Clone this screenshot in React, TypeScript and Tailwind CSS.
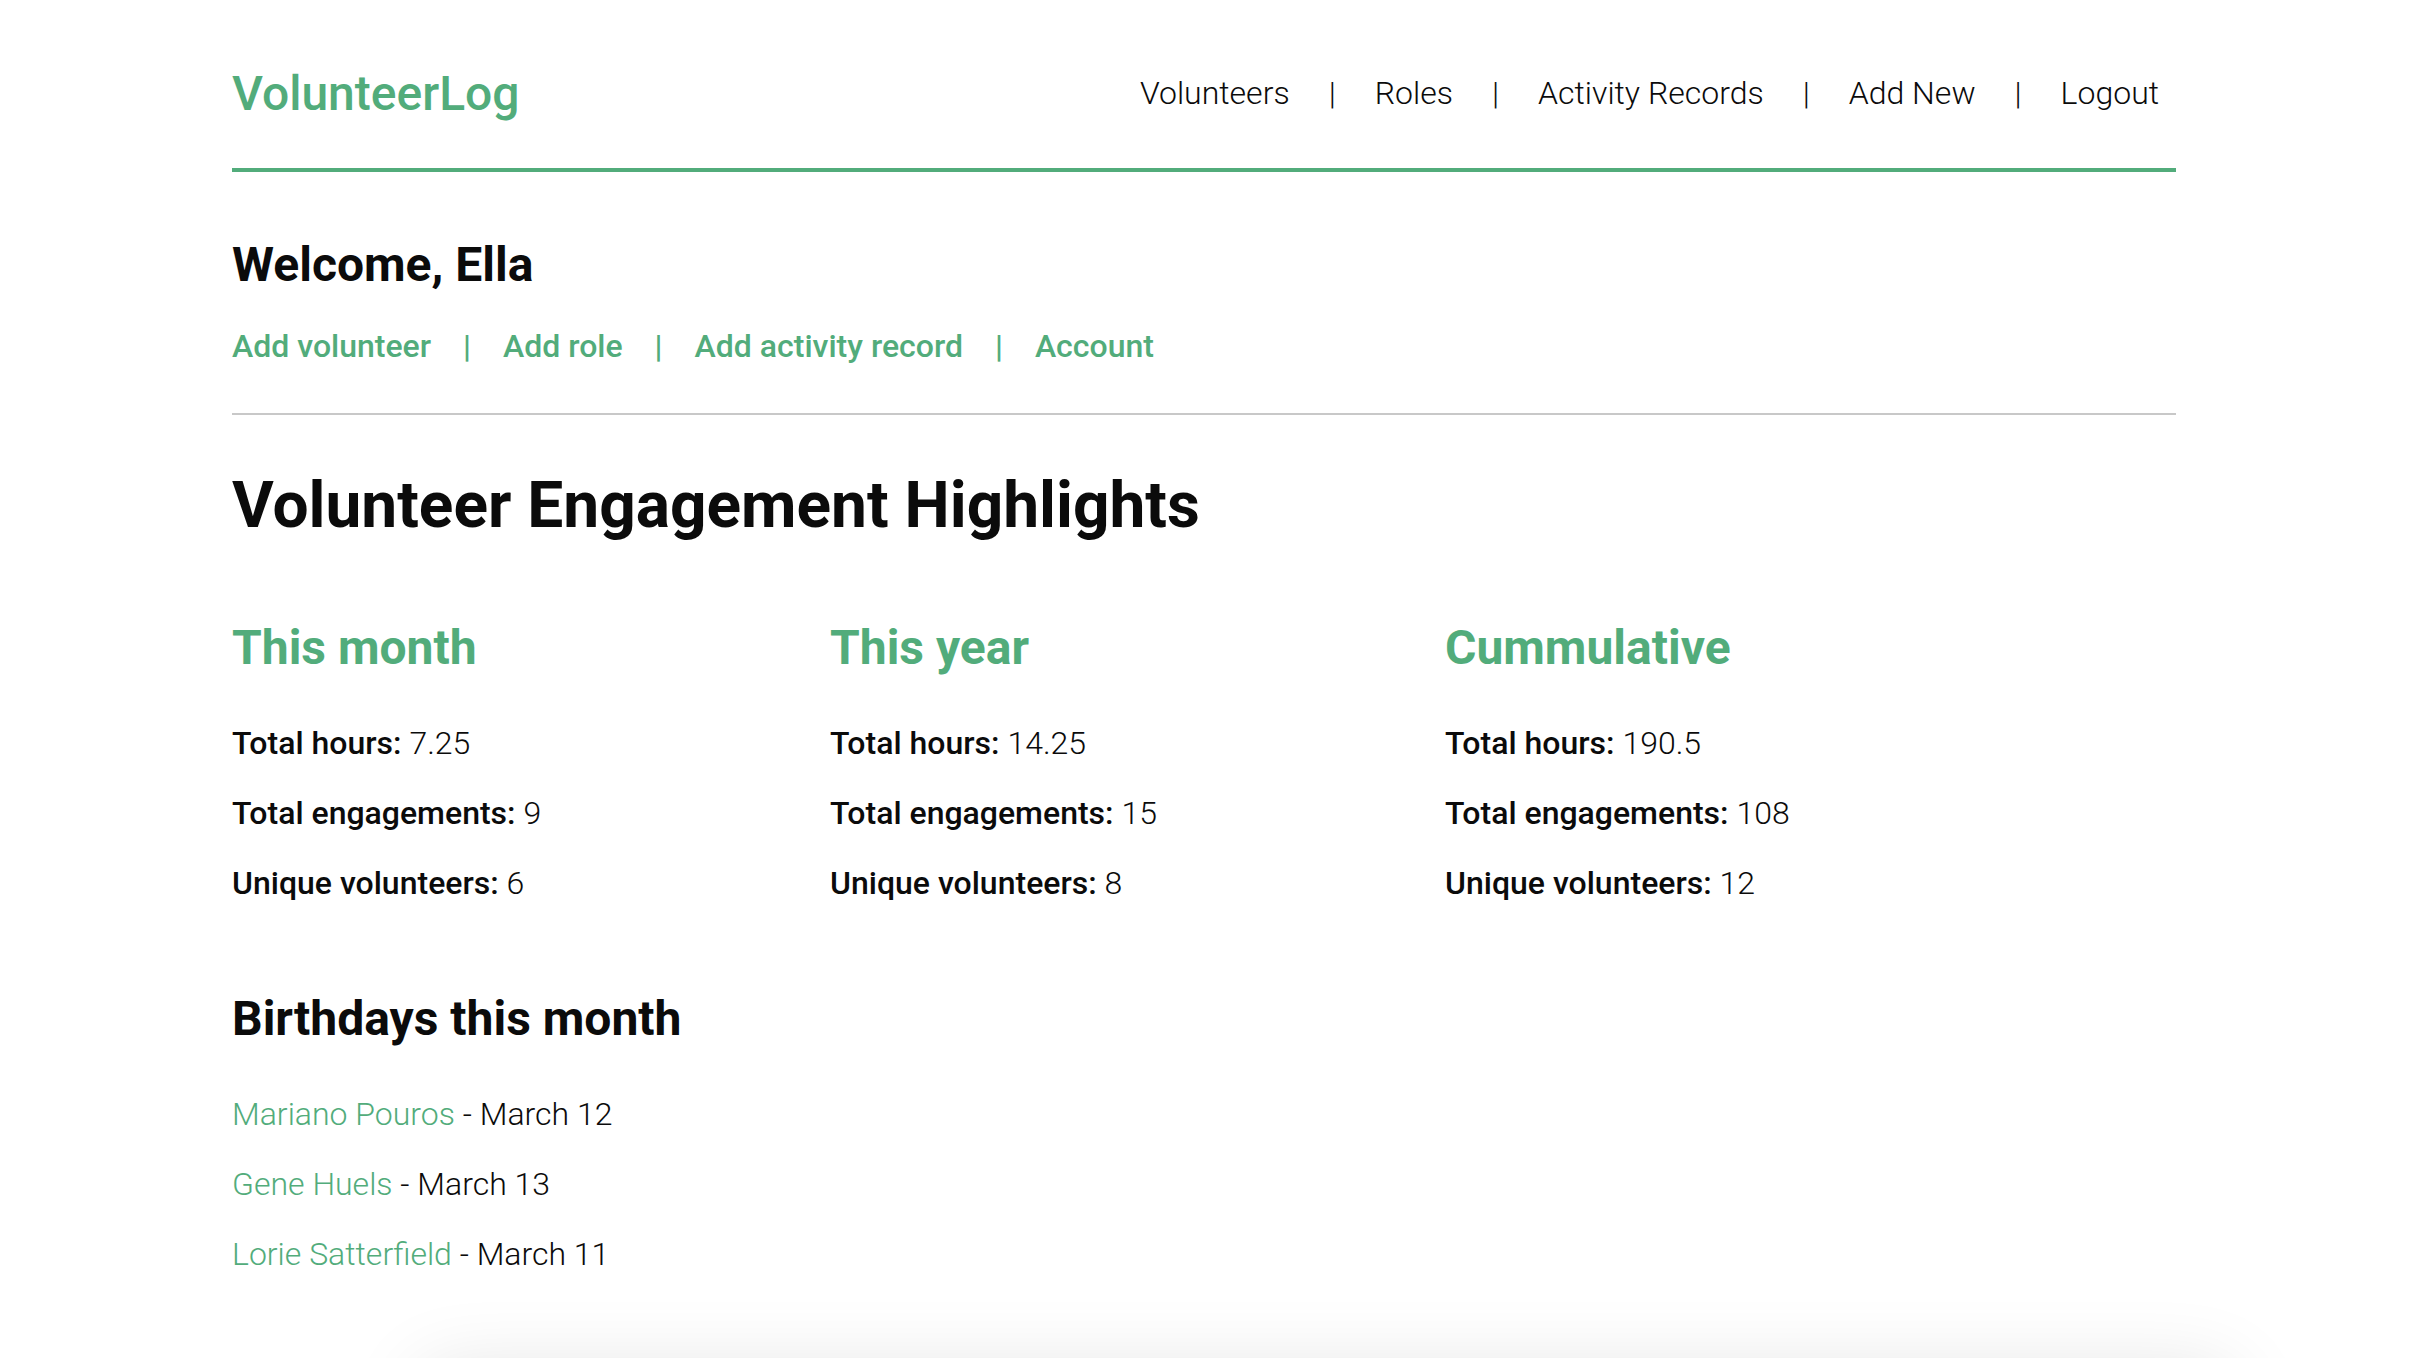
import React from 'react'

const green = 'text-[#52ac7b]'

const topNav = ['Volunteers', 'Roles', 'Activity Records', 'Add New', 'Logout']
const quickLinks = ['Add volunteer', 'Add role', 'Add activity record', 'Account']

const stats = [
  { title: 'This month', hours: '7.25', engagements: '9', unique: '6' },
  { title: 'This year', hours: '14.25', engagements: '15', unique: '8' },
  { title: 'Cummulative', hours: '190.5', engagements: '108', unique: '12' },
]

const birthdays = [
  { name: 'Mariano Pouros', date: 'March 12' },
  { name: 'Gene Huels', date: 'March 13' },
  { name: 'Lorie Satterfield', date: 'March 11' },
]

function StatRow({ label, value }: { label: string; value: string }) {
  return (
    <p className="text-[32px] leading-[40px]">
      <span className="font-medium">{label}:</span> <span className="font-light">{value}</span>
    </p>
  )
}

export default function App() {
  return (
    <div className="min-h-screen bg-white text-[#0b0b0b] font-[family-name:Roboto,sans-serif] overflow-hidden">
      <div className="ml-[232px] w-[1944px]">
        {/* header */}
        <header className="flex items-start justify-between pt-[70px] pb-[50px] border-b-[4px] border-[#52ac7b]">
          <div className={`text-[48px] leading-[48px] font-medium ${green}`}>VolunteerLog</div>
          <nav className="flex items-center gap-[39px] mt-[-1px] pr-[17px] text-[32px] leading-[48px] font-light">
            {topNav.map((item, i) => (
              <React.Fragment key={item}>
                {i > 0 && <span>|</span>}
                <a href="#">{item}</a>
              </React.Fragment>
            ))}
          </nav>
        </header>

        <h2 className="mt-[69px] text-[48px] leading-[48px] font-bold">Welcome, Ella</h2>
        <div className={`mt-[37px] flex items-center gap-[32px] text-[32px] leading-[40px] font-medium ${green}`}>
          {quickLinks.map((item, i) => (
            <React.Fragment key={item}>
              {i > 0 && <span>|</span>}
              <a href="#">{item}</a>
            </React.Fragment>
          ))}
        </div>
        <div className="mt-[47px] border-t-2 border-[#c8c8c8]" />

        <h1 className="mt-[51px] text-[64px] leading-[80px] font-bold">Volunteer Engagement Highlights</h1>

        <div className="mt-[72px] grid grid-cols-[598px_615px_1fr]">
          {stats.map((s) => (
            <div key={s.title}>
              <h3 className={`text-[48px] leading-[60px] font-bold ${green}`}>{s.title}</h3>
              <div className="mt-[45px] flex flex-col gap-[30px]">
                <StatRow label="Total hours" value={s.hours} />
                <StatRow label="Total engagements" value={s.engagements} />
                <StatRow label="Unique volunteers" value={s.unique} />
              </div>
            </div>
          ))}
        </div>

        <h2 className="mt-[92px] text-[48px] leading-[48px] font-bold">Birthdays this month</h2>
        <ul className="mt-[51px] flex flex-col gap-[30px] text-[32px] leading-[40px] font-light">
          {birthdays.map((b) => (
            <li key={b.name}>
              <a href="#" className={green}>{b.name}</a> - {b.date}
            </li>
          ))}
        </ul>

        <div className="mt-[98px] ml-[190px] w-[1810px] h-[200px] rounded-[12px] bg-white shadow-[0_0_80px_rgba(0,0,0,0.12)]" />
      </div>
    </div>
  )
}
